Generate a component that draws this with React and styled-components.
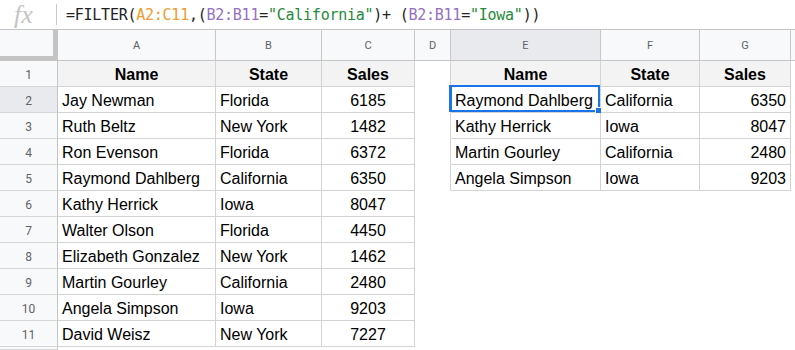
import React from 'react';
import styled, { createGlobalStyle } from 'styled-components';

const GlobalStyle = createGlobalStyle`
  html, body {
    margin: 0;
    padding: 0;
    background: #fff;
  }
  body {
    font-family: 'Liberation Sans', Arial, sans-serif;
  }
`;

const Page = styled.div`
  width: 795px;
  height: 350px;
  overflow: hidden;
  background: #fff;
`;

const FormulaBar = styled.div`
  height: 30px;
  box-sizing: border-box;
  border-bottom: 1px solid #c4c4c4;
  display: flex;
  align-items: center;
`;

const FxIcon = styled.div`
  width: 56px;
  padding-left: 14px;
  box-sizing: border-box;
  font-family: 'Liberation Serif', 'Times New Roman', serif;
  font-style: italic;
  font-size: 26px;
  line-height: 29px;
  color: #c4c4c4;
`;

const Divider = styled.div`
  width: 1px;
  height: 21px;
  background: #c8c8c8;
`;

const Formula = styled.div`
  padding-left: 9px;
  font-family: 'DejaVu Sans Mono', 'Liberation Mono', monospace;
  font-size: 15px;
  letter-spacing: -0.25px;
  color: #222;
  white-space: pre;
  padding-top: 1px;
`;

const Tok = styled.span`
  color: ${(p) => p.$c};
`;

const Grid = styled.div`
  display: grid;
  grid-template-columns: 58px 158px 106px 93px 36px 150px 99px 91px 1fr;
  grid-template-rows: 31px repeat(11, 26px) 1fr;
  height: 320px;
`;

const Corner = styled.div`
  background: #f8f9fa;
  box-sizing: border-box;
  border-right: 5px solid #c4c4c4;
  border-bottom: 5px solid #c4c4c4;
`;

const ColHead = styled.div`
  background: ${(p) => (p.$active ? '#e8eaed' : '#f8f9fa')};
  box-sizing: border-box;
  border-right: 1px solid #c7c7c7;
  border-bottom: 1px solid #c4c4c4;
  display: flex;
  align-items: center;
  justify-content: center;
  font-family: Roboto, 'Liberation Sans', sans-serif;
  font-size: 11px;
  color: #5f6368;
`;

const RowHead = styled.div`
  background: ${(p) => (p.$active ? '#e8eaed' : '#f8f9fa')};
  box-sizing: border-box;
  border-right: 1px solid #c4c4c4;
  border-bottom: 1px solid #d6d6d6;
  display: flex;
  align-items: center;
  justify-content: center;
  padding-top: 2px;
  font-family: Roboto, 'Liberation Sans', sans-serif;
  font-size: 12px;
  color: #5f6368;
`;

const Cell = styled.div`
  position: relative;
  box-sizing: border-box;
  background: ${(p) => (p.$head ? '#f3f3f3' : '#fff')};
  border-right: 1px solid ${(p) => (p.$right ? '#d3d3d3' : 'transparent')};
  border-bottom: 1px solid ${(p) => (p.$bottom ? '#d3d3d3' : 'transparent')};
  display: flex;
  align-items: flex-end;
  justify-content: ${(p) => p.$align || 'flex-start'};
  padding: 0 4px 2px 4px;
  font-size: 16px;
  font-weight: ${(p) => (p.$head ? 700 : 400)};
  color: #000;
  white-space: nowrap;
`;

const Selection = styled.div`
  position: absolute;
  left: -2px;
  top: -2px;
  right: 0;
  bottom: 0;
  border: 2px solid #1a73e8;
  border-left-width: 3px;
  pointer-events: none;
`;

const Handle = styled.div`
  position: absolute;
  right: -5px;
  bottom: -5px;
  width: 6px;
  height: 6px;
  background: #1a73e8;
  border: 1px solid #fff;
`;

const left = [
  ['Jay Newman', 'Florida', 6185],
  ['Ruth Beltz', 'New York', 1482],
  ['Ron Evenson', 'Florida', 6372],
  ['Raymond Dahlberg', 'California', 6350],
  ['Kathy Herrick', 'Iowa', 8047],
  ['Walter Olson', 'Florida', 4450],
  ['Elizabeth Gonzalez', 'New York', 1462],
  ['Martin Gourley', 'California', 2480],
  ['Angela Simpson', 'Iowa', 9203],
  ['David Weisz', 'New York', 7227],
];

const right = [
  ['Raymond Dahlberg', 'California', 6350],
  ['Kathy Herrick', 'Iowa', 8047],
  ['Martin Gourley', 'California', 2480],
  ['Angela Simpson', 'Iowa', 9203],
];

const headers = ['Name', 'State', 'Sales'];
const letters = ['A', 'B', 'C', 'D', 'E', 'F', 'G', ''];

const App = () => {
  const rows = [];

  for (let r = 1; r <= 11; r++) {
    const isHead = r === 1;
    const l = isHead ? headers : left[r - 2];
    const rt = isHead ? headers : right[r - 2];
    const inRight = r <= 5;

    rows.push(<RowHead key={`rh${r}`} $active={r === 2}>{r}</RowHead>);

    // left table A-C
    l.forEach((v, i) => (
      rows.push(
        <Cell
          key={`l${r}${i}`}
          $right
          $bottom
          $head={isHead}
          $align={isHead || i === 2 ? 'center' : 'flex-start'}
        >
          {v}
        </Cell>
      )
    ));

    // column D
    rows.push(<Cell key={`d${r}`} $right={inRight} />);

    // right table E-G
    [0, 1, 2].forEach((i) => {
      const v = inRight ? rt[i] : '';
      rows.push(
        <Cell
          key={`r${r}${i}`}
          $right={inRight}
          $bottom={inRight}
          $head={isHead}
          $align={isHead ? 'center' : i === 2 ? 'flex-end' : 'flex-start'}
        >
          {v}
          {r === 2 && i === 0 && (
            <Selection>
              <Handle />
            </Selection>
          )}
        </Cell>
      );
    });

    rows.push(<Cell key={`h${r}`} />);
  }

  return (
    <Page>
      <GlobalStyle />
      <FormulaBar>
        <FxIcon>fx</FxIcon>
        <Divider />
        <Formula>
          =FILTER(<Tok $c="#f09b2c">A2:C11</Tok>,(<Tok $c="#9470c4">B2:B11</Tok>=<Tok $c="#1f8a3b">"California"</Tok>)+ (<Tok $c="#9470c4">B2:B11</Tok>=<Tok $c="#1f8a3b">"Iowa"</Tok>))
        </Formula>
      </FormulaBar>
      <Grid>
        <Corner />
        {letters.map((c, i) => (
          <ColHead key={`c${i}`} $active={c === 'E'}>{c}</ColHead>
        ))}
        {rows}
        <RowHead />
      </Grid>
    </Page>
  );
};

export default App;
